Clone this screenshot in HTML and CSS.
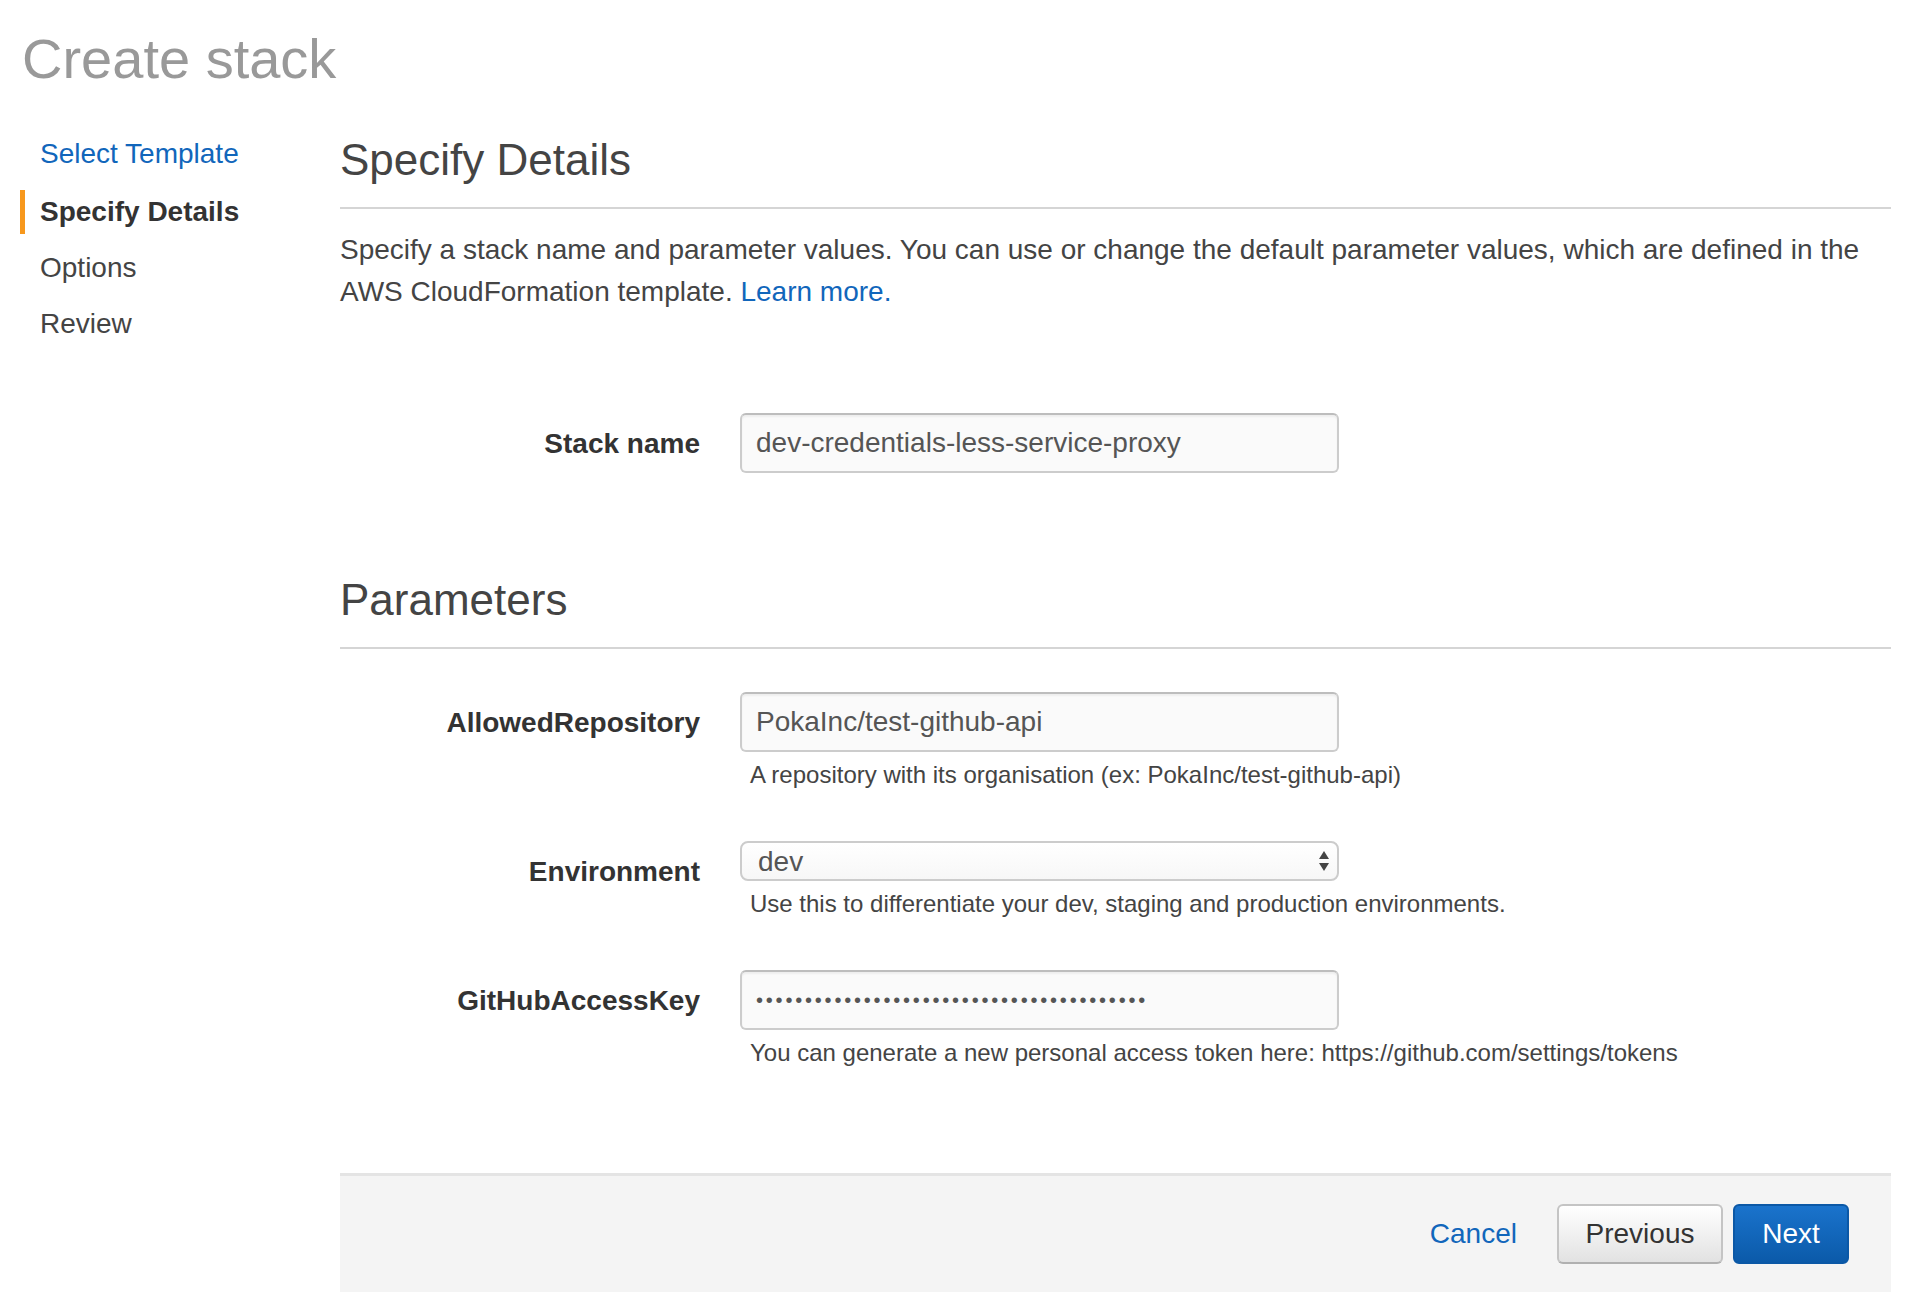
FILE: index.html
```html
<!DOCTYPE html>
<html lang="en">
<head>
<meta charset="utf-8">
<title>Create stack</title>
<link rel="stylesheet" href="styles.css">
</head>
<body>
<h1 class="page-title">Create stack</h1>
<div class="layout">
  <nav class="steps">
    <a class="step step-link" href="#">Select Template</a>
    <span class="step step-active">Specify Details</span>
    <span class="step">Options</span>
    <span class="step">Review</span>
  </nav>
  <main class="main">
    <section class="section">
      <h2 class="section-title">Specify Details</h2>
      <p class="intro">Specify a stack name and parameter values. You can use or change the default parameter values, which are defined in the AWS CloudFormation template. <a class="link" href="#">Learn more.</a></p>
      <div class="form-row form-row-first">
        <label class="field-label">Stack name</label>
        <div class="field">
          <input class="text-input" type="text" value="dev-credentials-less-service-proxy" readonly>
        </div>
      </div>
    </section>
    <section class="section section-params">
      <h2 class="section-title">Parameters</h2>
      <div class="form-row form-row-first">
        <label class="field-label">AllowedRepository</label>
        <div class="field">
          <input class="text-input" type="text" value="PokaInc/test-github-api" readonly>
          <div class="help">A repository with its organisation (ex: PokaInc/test-github-api)</div>
        </div>
      </div>
      <div class="form-row">
        <label class="field-label">Environment</label>
        <div class="field">
          <div class="select-wrap">
            <select class="select-input"><option>dev</option></select>
            <svg class="select-arrows" width="12" height="22" viewBox="0 0 12 22"><path d="M6 1 L11 9 L1 9 Z" fill="#444"/><path d="M1 13 L11 13 L6 21 Z" fill="#444"/></svg>
          </div>
          <div class="help">Use this to differentiate your dev, staging and production environments.</div>
        </div>
      </div>
      <div class="form-row">
        <label class="field-label">GitHubAccessKey</label>
        <div class="field">
          <div class="text-input pw">&#8226;&#8226;&#8226;&#8226;&#8226;&#8226;&#8226;&#8226;&#8226;&#8226;&#8226;&#8226;&#8226;&#8226;&#8226;&#8226;&#8226;&#8226;&#8226;&#8226;&#8226;&#8226;&#8226;&#8226;&#8226;&#8226;&#8226;&#8226;&#8226;&#8226;&#8226;&#8226;&#8226;&#8226;&#8226;&#8226;&#8226;&#8226;&#8226;&#8226;</div>
          <div class="help">You can generate a new personal access token here: https://github.com/settings/tokens</div>
        </div>
      </div>
    </section>
    <footer class="actions">
      <a class="cancel" href="#">Cancel</a>
      <button class="btn btn-default" type="button">Previous</button>
      <button class="btn btn-primary" type="button">Next</button>
    </footer>
  </main>
</div>
</body>
</html>
```

FILE: styles.css
```css
html, body {
  margin: 0;
  padding: 0;
  background: #ffffff;
}
body {
  font-family: "Liberation Sans", Arial, Helvetica, sans-serif;
  color: #444;
  width: 1912px;
}
.page-title {
  margin: 0;
  padding: 28px 0 0 22px;
  font-size: 56px;
  line-height: 62px;
  font-weight: normal;
  color: #999;
}
.layout {
  display: flex;
  margin-top: 40px;
}
.steps {
  width: 320px;
  padding-left: 20px;
  padding-top: 2px;
  display: flex;
  flex-direction: column;
  flex-shrink: 0;
}
.step {
  display: block;
  border-left: 5px solid transparent;
  padding-left: 15px;
  font-size: 28px;
  line-height: 44px;
  margin-bottom: 12px;
  color: #444;
  text-decoration: none;
}
.step-link {
  color: #1166bb;
  margin-bottom: 14px;
}
.step-active {
  border-left-color: #f7981d;
  font-weight: bold;
  color: #333;
}
.main {
  flex: 1;
  margin-right: 21px;
  padding-top: 6px;
}
.section-title {
  margin: 0;
  font-size: 44px;
  line-height: 48px;
  font-weight: normal;
  color: #444;
  padding-bottom: 23px;
  border-bottom: 2px solid #d5d5d5;
}
.intro {
  margin: 20px 0 0 0;
  font-size: 28px;
  line-height: 42px;
  color: #444;
}
.link {
  color: #1166bb;
  text-decoration: none;
}
.form-row {
  display: grid;
  grid-template-columns: 360px 599px;
  column-gap: 40px;
  margin-top: 48px;
}
.section .form-row-first {
  margin-top: 100px;
}
.section-params {
  margin-top: 103px;
}
.section-params .form-row-first {
  margin-top: 43px;
}
.field-label {
  text-align: right;
  font-size: 28px;
  line-height: 42px;
  padding-top: 10px;
  font-weight: bold;
  color: #333;
}
.field {
  display: flex;
  flex-direction: column;
}
.text-input {
  box-sizing: border-box;
  width: 599px;
  height: 60px;
  margin: 0;
  padding: 0 14px;
  border: 2px solid #cccccc;
  border-top-color: #bdbdbd;
  border-radius: 6px;
  background: #fafafa;
  box-shadow: inset 0 2px 2px rgba(0,0,0,0.05);
  font-family: "Liberation Sans", Arial, Helvetica, sans-serif;
  font-size: 28px;
  color: #555;
  outline: none;
}
.pw {
  display: flex;
  align-items: center;
  font-size: 20px;
  letter-spacing: 2.8px;
  color: #555;
}
.help {
  margin-top: 5px;
  padding-left: 10px;
  font-size: 24px;
  line-height: 36px;
  color: #444;
  white-space: nowrap;
}
.select-wrap {
  position: relative;
  width: 599px;
  height: 40px;
}
.select-input {
  -webkit-appearance: none;
  appearance: none;
  box-sizing: border-box;
  width: 599px;
  height: 40px;
  margin: 0;
  padding: 0 0 0 16px;
  border: 2px solid #cccccc;
  border-radius: 8px;
  background: linear-gradient(#ffffff, #f7f7f7);
  font-family: "Liberation Sans", Arial, Helvetica, sans-serif;
  font-size: 28px;
  color: #555;
  outline: none;
}
.select-arrows {
  position: absolute;
  right: 9px;
  top: 9px;
  pointer-events: none;
}
.actions {
  display: flex;
  justify-content: flex-end;
  align-items: center;
  margin-top: 102px;
  padding: 28px 42px 28px 0;
  background: #f4f4f4;
  border-top: 3px solid #e4e4e4;
}
.cancel {
  font-size: 28px;
  color: #1166bb;
  text-decoration: none;
  margin-right: 40px;
}
.btn {
  box-sizing: border-box;
  height: 60px;
  margin: 0;
  border-radius: 6px;
  font-family: "Liberation Sans", Arial, Helvetica, sans-serif;
  font-size: 28px;
  cursor: pointer;
}
.btn-default {
  width: 166px;
  padding: 0;
  border: 2px solid #c4c4c4;
  border-bottom-color: #b0b0b0;
  background: linear-gradient(#ffffff, #e2e2e2);
  color: #333;
}
.btn-primary {
  width: 116px;
  padding: 0;
  margin-left: 10px;
  border: 2px solid #0b58a6;
  background: linear-gradient(#1a73cc, #0b5aa9);
  color: #ffffff;
}
```
